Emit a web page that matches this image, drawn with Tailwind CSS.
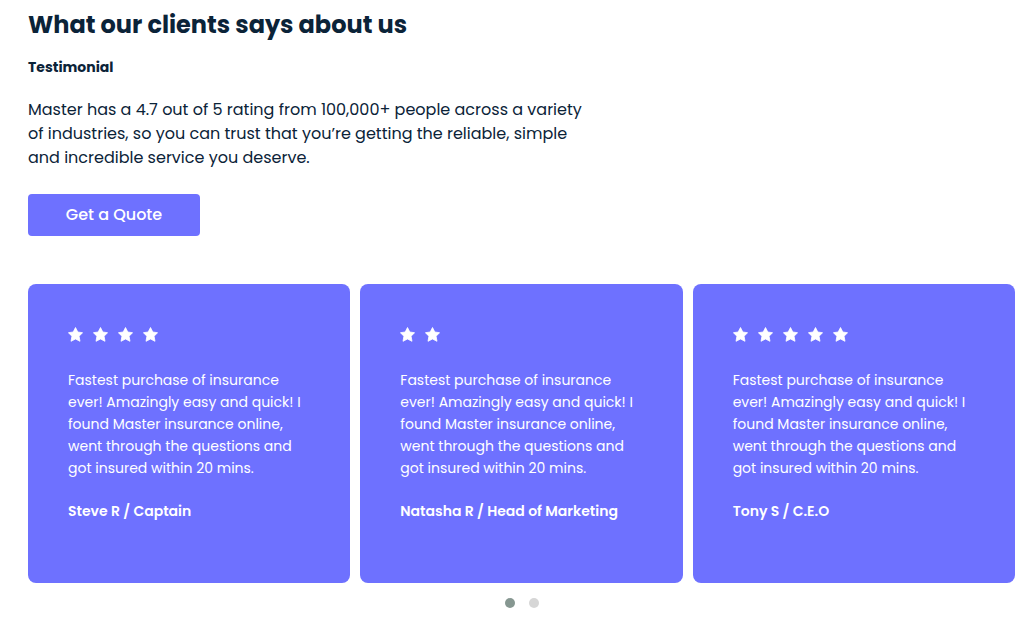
<!DOCTYPE html>
<html lang="en">
<head>
<meta charset="utf-8">
<title>Testimonials</title>
<script src="https://cdn.jsdelivr.net/npm/@tailwindcss/browser@4"></script>
</head>
<body class="bg-white font-[Poppins,Inter,sans-serif] text-[#0b2338] antialiased">
<svg class="hidden" aria-hidden="true"><symbol id="star" viewBox="0 0 15 15"><path d="M7.5.5 9.8 5 14.6 5.7 11.1 9.2 12 14.3 7.5 12 3 14.3 3.9 9.2 .4 5.7 5.2 5Z" fill="currentColor" stroke="currentColor" stroke-width=".8" stroke-linejoin="round"/></symbol></svg>
<section class="pl-7 pr-3.5 pt-[7px]">
  <h2 class="text-2xl leading-9 font-bold">What our clients says about us</h2>
  <h3 class="mt-[13px] text-sm leading-[22px] font-bold">Testimonial</h3>
  <p class="mt-5 max-w-[570px] text-base leading-6">Master has a 4.7 out of 5 rating from 100,000+ people across a variety<br>of industries, so you can trust that you’re getting the reliable, simple<br>and incredible service you deserve.</p>
  <button type="button" class="mt-6 h-[42px] w-[172px] rounded bg-[#6e71ff] text-base font-medium text-white">Get a Quote</button>
  <div class="mt-12 grid grid-cols-3 gap-2.5 text-sm leading-[22px] text-white">
    <article class="rounded-lg bg-[#6e71ff] px-10 pt-[43px] pb-[61px]">
      <div class="flex h-4 items-start gap-2.5" role="img" aria-label="4 stars"><svg class="size-[15px]"><use href="#star"/></svg><svg class="size-[15px]"><use href="#star"/></svg><svg class="size-[15px]"><use href="#star"/></svg><svg class="size-[15px]"><use href="#star"/></svg></div>
      <p class="mt-[26px]">Fastest purchase of insurance<br>ever! Amazingly easy and quick! I<br>found Master insurance online,<br>went through the questions and<br>got insured within 20 mins.</p>
      <h4 class="mt-[21px] font-semibold">Steve R / Captain</h4>
    </article>
    <article class="rounded-lg bg-[#6e71ff] px-10 pt-[43px] pb-[61px]">
      <div class="flex h-4 items-start gap-2.5" role="img" aria-label="2 stars"><svg class="size-[15px]"><use href="#star"/></svg><svg class="size-[15px]"><use href="#star"/></svg></div>
      <p class="mt-[26px]">Fastest purchase of insurance<br>ever! Amazingly easy and quick! I<br>found Master insurance online,<br>went through the questions and<br>got insured within 20 mins.</p>
      <h4 class="mt-[21px] font-semibold">Natasha R / Head of Marketing</h4>
    </article>
    <article class="rounded-lg bg-[#6e71ff] px-10 pt-[43px] pb-[61px]">
      <div class="flex h-4 items-start gap-2.5" role="img" aria-label="5 stars"><svg class="size-[15px]"><use href="#star"/></svg><svg class="size-[15px]"><use href="#star"/></svg><svg class="size-[15px]"><use href="#star"/></svg><svg class="size-[15px]"><use href="#star"/></svg><svg class="size-[15px]"><use href="#star"/></svg></div>
      <p class="mt-[26px]">Fastest purchase of insurance<br>ever! Amazingly easy and quick! I<br>found Master insurance online,<br>went through the questions and<br>got insured within 20 mins.</p>
      <h4 class="mt-[21px] font-semibold">Tony S / C.E.O</h4>
    </article>
  </div>
  <div class="mt-[15px] flex justify-center gap-3.5">
    <button type="button" aria-label="Page 1" class="size-2.5 rounded-full bg-[#869791]"></button>
    <button type="button" aria-label="Page 2" class="size-2.5 rounded-full bg-[#d6d6d6]"></button>
  </div>
</section>
</body>
</html>
